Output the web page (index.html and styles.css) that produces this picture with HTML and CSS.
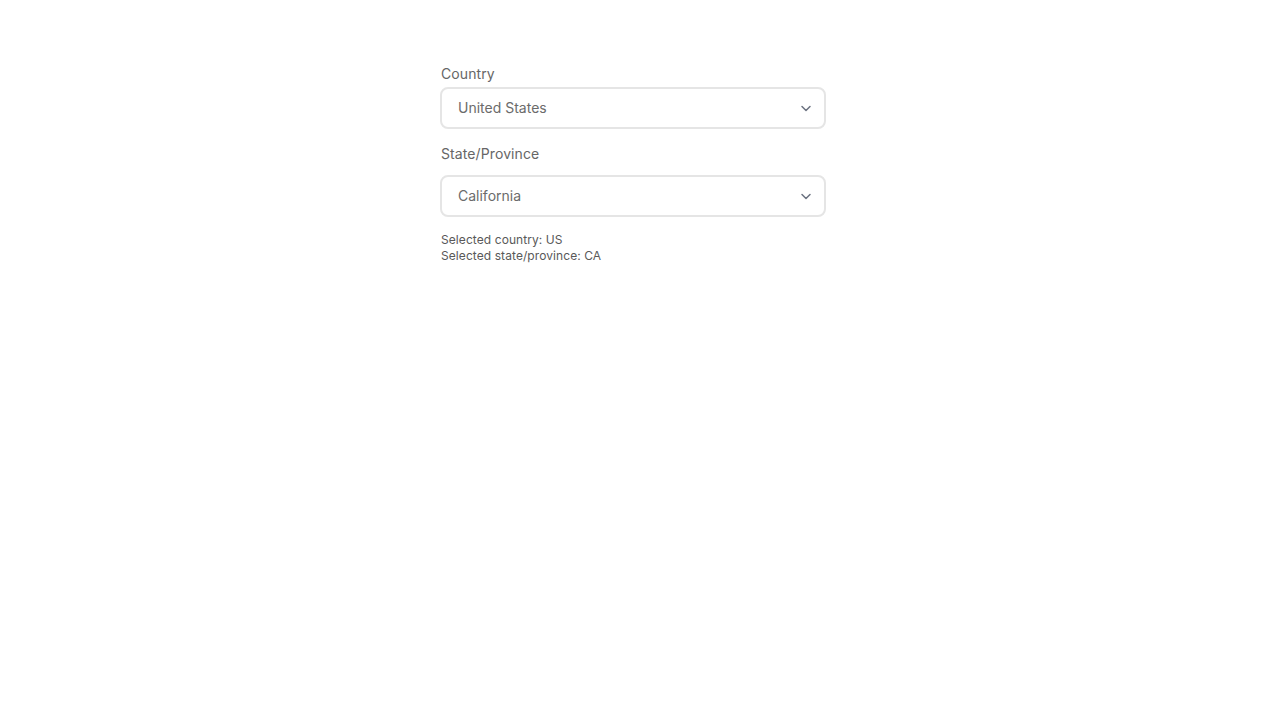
FILE: index.html
```html
<!DOCTYPE html>
<html>
<head>
<meta charset="utf-8">
<link rel="stylesheet" href="styles.css">
</head>
<body>
<div class="wrap">
  <div class="form">
    <div class="label label-country">Country</div>
    <div class="select">
      <span class="value">United States</span>
      <svg class="chev" width="12" height="12" viewBox="0 0 12 12"><path d="M2 4.5 L6 8.5 L10 4.5" fill="none" stroke="#6b7280" stroke-width="1.5" stroke-linecap="round" stroke-linejoin="round"/></svg>
    </div>
    <div class="label label-state">State/Province</div>
    <div class="select">
      <span class="value">California</span>
      <svg class="chev" width="12" height="12" viewBox="0 0 12 12"><path d="M2 4.5 L6 8.5 L10 4.5" fill="none" stroke="#6b7280" stroke-width="1.5" stroke-linecap="round" stroke-linejoin="round"/></svg>
    </div>
    <div class="info">
      <div>Selected country: US</div>
      <div>Selected state/province: CA</div>
    </div>
  </div>
</div>
</body>
</html>
```
FILE: styles.css
```css
html, body { margin: 0; padding: 0; background: #fff; }
body { font-family: Inter, "Noto Sans", sans-serif; }
.wrap { padding: 64px 0 0 440px; }
.form { width: 386px; display: flex; flex-direction: column; }
.label { font-size: 14px; line-height: 20px; color: #666666; padding-left: 1px; letter-spacing: 0.1px; }
.label-country { margin-bottom: 3px; }
.label-state { margin-top: 15px; margin-bottom: 11px; }
.select {
  box-sizing: border-box;
  height: 42px;
  border: 2px solid #e5e5e5;
  border-radius: 8px;
  display: flex;
  align-items: center;
  justify-content: space-between;
  padding: 0 12px 0 16px;
}
.value { font-size: 14px; line-height: 20px; color: #6b6b6b; }
.chev { display: block; }
.info { margin-top: 15px; font-size: 12px; line-height: 16px; color: #595959; padding-left: 1px; letter-spacing: 0.08px; }
```
